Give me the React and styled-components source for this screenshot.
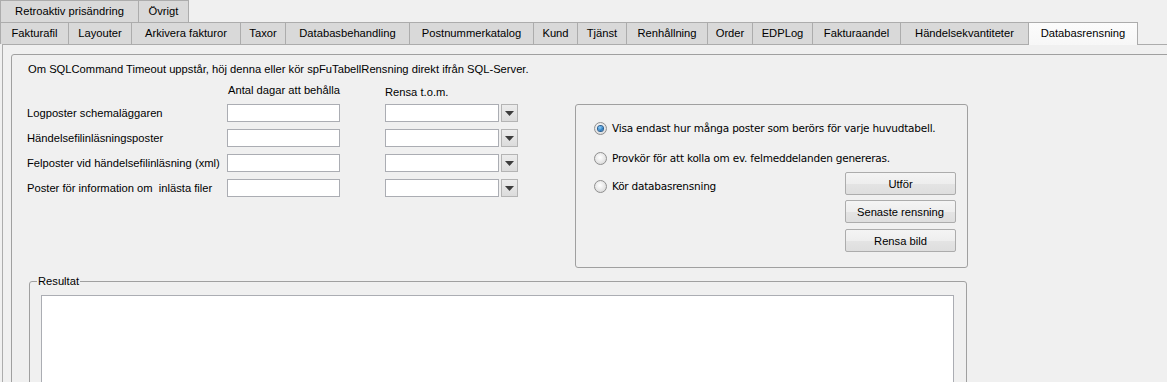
import styled, { createGlobalStyle } from 'styled-components'

const GlobalStyle = createGlobalStyle`
	html, body {
		margin: 0;
		padding: 0;
		background: #f0f0f0;
		overflow: hidden;
	}
	body {
		font-family: 'Liberation Sans', Arial, sans-serif;
		font-size: 11.2px;
		color: #000;
	}
`

const Window = styled.div`
	width: 1167px;
	height: 382px;
	overflow: hidden;
`

const TabRow = styled.div`
	display: flex;
	align-items: flex-start;
`

const Tab = styled.div`
	box-sizing: border-box;
	width: ${(p) => p.w}px;
	height: ${(p) => (p.active ? 23 : 22)}px;
	border-top: 1px solid #acacac;
	border-left: 1px solid #acacac;
	border-right: ${(p) => (p.last ? '1px solid #acacac' : 'none')};
	background: ${(p) => (p.active ? 'linear-gradient(#fcfcfc, #f7f7f7)' : '#d9d9d9')};
	line-height: 21px;
	text-align: center;
	white-space: nowrap;
	position: relative;
	z-index: ${(p) => (p.active ? 2 : 1)};
	margin-bottom: ${(p) => (p.active ? -1 : 0)}px;
`

const TabPage = styled.div`
	margin-left: 2px;
	border-top: 1px solid #acacac;
	border-left: 1px solid #acacac;
	height: 400px;
`

const Panel = styled.div`
	margin: 9px -40px 0 8px;
	border: 1px solid #a0a0a0;
	border-radius: 3px;
	padding: 7px 0 0 15px;
	height: 400px;
`

const Info = styled.div`
	line-height: 14px;
	margin-left: 1px;
`

const MainRow = styled.div`
	display: flex;
	align-items: flex-start;
	margin-top: 7px;
`

const FormGrid = styled.div`
	display: grid;
	grid-template-columns: 200px 158px 133px;
	grid-auto-rows: 18px;
	row-gap: 7px;
	align-items: center;
	grid-template-rows: 14px;
`

const Header = styled.div`
	line-height: 14px;
	padding-left: ${(p) => p.indent || 0}px;
	margin-top: ${(p) => p.drop || 0}px;
`

const Label = styled.div`
	line-height: 14px;
	white-space: pre;
`

const TextBox = styled.div`
	box-sizing: border-box;
	width: 113px;
	height: 18px;
	background: #fff;
	border: 1px solid #abadb3;
`

const DateField = styled.div`
	display: flex;
	gap: 2px;
	height: 18px;
`

const Combo = styled(TextBox)`
	width: 114px;
`

const DropButton = styled.div`
	box-sizing: border-box;
	width: 17px;
	height: 18px;
	border: 1px solid #b4b4b4;
	background: linear-gradient(#ececec, #dcdcdc);
	display: flex;
	align-items: center;
	justify-content: center;
`

const OptionsGroup = styled.div`
	box-sizing: border-box;
	width: 393px;
	height: 164px;
	margin: 21px 0 0 57px;
	border: 1px solid #a0a0a0;
	border-radius: 3px;
	padding: 16px 11px 15px 18px;
	display: grid;
	grid-template-columns: 1fr 111px;
	grid-template-rows: auto auto 1fr;
	font-family: 'DejaVu Sans', Verdana, sans-serif;
	font-size: 10.5px;
	letter-spacing: -0.22px;
`

const Radio = styled.label`
	display: flex;
	align-items: center;
	gap: 5px;
	height: 14px;
	grid-column: ${(p) => (p.wide ? '1 / -1' : '1')};
	margin-top: ${(p) => p.mt || 0}px;
	white-space: nowrap;
`

const RadioDot = styled.span`
	box-sizing: border-box;
	width: 13px;
	height: 13px;
	border-radius: 50%;
	border: 1px solid #8f8f8f;
	background: radial-gradient(circle at 45% 40%, #ffffff 0%, #e6e6e6 55%, #cfcfcf 100%);
	display: flex;
	align-items: center;
	justify-content: center;
	flex-shrink: 0;

	&::after {
		content: '';
		width: 5px;
		height: 5px;
		border-radius: 50%;
		background: ${(p) => (p.checked ? 'radial-gradient(circle at 40% 35%, #8fd3ff, #1c6fb8 70%, #0d4a85)' : 'transparent')};
		box-shadow: ${(p) => (p.checked ? '0 0 0 1px #2a5f91' : 'none')};
	}
`

const ButtonColumn = styled.div`
	grid-column: 2;
	grid-row: 3;
	display: flex;
	flex-direction: column;
	gap: 5px;
	margin-top: 7px;
	font-family: 'Liberation Sans', Arial, sans-serif;
	font-size: 11.2px;
	letter-spacing: 0;
`

const Button = styled.div`
	box-sizing: border-box;
	height: 23px;
	border: 1px solid #acacac;
	border-radius: 2px;
	background: linear-gradient(#f4f4f4, #eeeeee 50%, #e4e4e4 51%, #dedede);
	display: flex;
	align-items: center;
	justify-content: center;
	margin-top: ${(p) => p.mt || 0}px;
`

const ResultGroup = styled.fieldset`
	box-sizing: border-box;
	width: 938px;
	margin: 6px 0 0 2px;
	padding: 7px 12px 0 11px;
	min-width: 0;
	border: 1px solid #a0a0a0;
	border-radius: 3px;
	height: 200px;

	legend {
		padding: 0 1px;
		margin-left: -4px;
		line-height: 14px;
	}
`

const ResultBox = styled.div`
	box-sizing: border-box;
	width: 913px;
	height: 120px;
	background: #fff;
	border: 1px solid #abadb3;
`

const Arrow = () => (
	<svg width='9' height='5' viewBox='0 0 9 5'>
		<polygon points='0,0 9,0 4.5,5' fill='#3c3c3c' />
	</svg>
)

const topTabs = [
	{ name: 'Retroaktiv prisändring', w: 138 },
	{ name: 'Övrigt', w: 51 },
]

const tabs = [
	{ name: 'Fakturafil', w: 68 },
	{ name: 'Layouter', w: 63 },
	{ name: 'Arkivera fakturor', w: 109 },
	{ name: 'Taxor', w: 45 },
	{ name: 'Databasbehandling', w: 124 },
	{ name: 'Postnummerkatalog', w: 124 },
	{ name: 'Kund', w: 44 },
	{ name: 'Tjänst', w: 49 },
	{ name: 'Renhållning', w: 81 },
	{ name: 'Order', w: 45 },
	{ name: 'EDPLog', w: 60 },
	{ name: 'Fakturaandel', w: 88 },
	{ name: 'Händelsekvantiteter', w: 128 },
	{ name: 'Databasrensning', w: 110, active: true },
]

const rows = [
	'Logposter schemaläggaren',
	'Händelsefilinläsningsposter',
	'Felposter vid händelsefilinläsning (xml)',
	'Poster för information om  inlästa filer',
]

export default function App() {
	return (
		<Window>
			<GlobalStyle />
			<TabRow>
				{topTabs.map((t, i) => (
					<Tab key={t.name} w={t.w} last={i === topTabs.length - 1}>
						{t.name}
					</Tab>
				))}
			</TabRow>
			<TabRow>
				{tabs.map((t) => (
					<Tab key={t.name} w={t.w} active={t.active} last={t.active}>
						{t.name}
					</Tab>
				))}
			</TabRow>
			<TabPage>
				<Panel>
					<Info>Om SQLCommand Timeout uppstår, höj denna eller kör spFuTabellRensning direkt ifrån SQL-Server.</Info>
					<MainRow>
						<FormGrid>
							<div />
							<Header indent={1}>Antal dagar att behålla</Header>
							<Header drop={3}>Rensa t.o.m.</Header>
							{rows.map((r) => [
								<Label key={r}>{r}</Label>,
								<TextBox key={r + '-days'} />,
								<DateField key={r + '-date'}>
									<Combo />
									<DropButton>
										<Arrow />
									</DropButton>
								</DateField>,
							])}
						</FormGrid>
						<OptionsGroup>
							<Radio wide>
								<RadioDot checked />
								Visa endast hur många poster som berörs för varje huvudtabell.
							</Radio>
							<Radio wide mt={16}>
								<RadioDot />
								Provkör för att kolla om ev. felmeddelanden genereras.
							</Radio>
							<Radio mt={14}>
								<RadioDot />
								Kör databasrensning
							</Radio>
							<ButtonColumn>
								<Button>Utför</Button>
								<Button>Senaste rensning</Button>
								<Button mt={1}>Rensa bild</Button>
							</ButtonColumn>
						</OptionsGroup>
					</MainRow>
					<ResultGroup>
						<legend>Resultat</legend>
						<ResultBox />
					</ResultGroup>
				</Panel>
			</TabPage>
		</Window>
	)
}
